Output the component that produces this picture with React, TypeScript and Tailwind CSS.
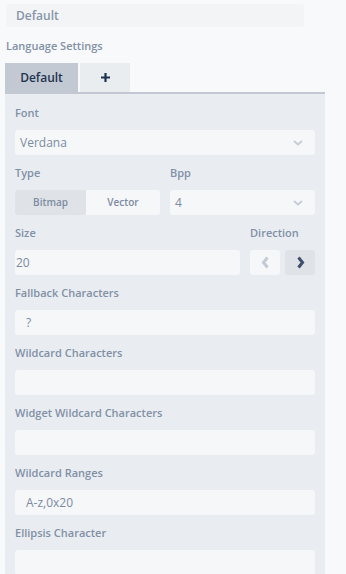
const Chevron = () => (
  <svg width="10" height="6" viewBox="0 0 10 6" className="shrink-0">
    <path d="M1 1l4 3.5L9 1" fill="none" stroke="#c5ccd6" strokeWidth="1.8" />
  </svg>
);

const Label = ({ children }: { children: React.ReactNode }) => (
  <div className="h-[20px] flex items-center text-[11px] font-semibold text-[#8290a6]">
    {children}
  </div>
);

const Field = ({ value, pad = 'px-[6px]' }: { value?: string; pad?: string }) => (
  <div
    className={`h-[25px] mt-[7px] flex items-center rounded-[3px] bg-[#f5f7f9] text-[12px] text-[#7c8ba1] ${pad}`}
  >
    {value}
  </div>
);

const Select = ({ value }: { value: string }) => (
  <div className="h-[25px] mt-[7px] flex items-center justify-between rounded-[3px] bg-[#f5f7f9] pl-[5px] pr-[12px] text-[12px] text-[#7c8ba1]">
    <span>{value}</span>
    <Chevron />
  </div>
);

export default function App() {
  return (
    <div
      className="w-[346px] h-[574px] overflow-hidden bg-[#f8f9fb]"
      style={{ fontFamily: '"Open Sans", sans-serif' }}
    >
      <div className="pt-[4px] pl-[6px]">
        <div className="w-[298px] h-[23px] flex items-center rounded-[3px] bg-[#f2f4f6] pl-[10px] text-[12px] font-semibold text-[#8794a8]">
          Default
        </div>
        <div className="mt-[9px] h-[20px] flex items-center text-[11px] font-semibold text-[#8290a6]">
          Language Settings
        </div>
      </div>

      <div className="ml-[5px] w-[320px] mt-[7px]">
        <div className="flex h-[29px]">
          <div className="w-[73px] flex items-center justify-center bg-[#c2c9d3] text-[12px] font-semibold text-[#1f3350]">
            Default
          </div>
          <div className="ml-[2px] w-[50px] flex items-center justify-center bg-[#e9edf0] text-[#1f3350]">
            <svg width="11" height="11" viewBox="0 0 11 11">
              <path d="M5.5 1v9M1 5.5h9" stroke="#1f3350" strokeWidth="2.2" />
            </svg>
          </div>
        </div>
        <div className="h-[2px] bg-[#c2c9d3]" />

        <div className="bg-[#e9edf1] px-[10px] pt-[9px] h-[500px]">
          <Label>Font</Label>
          <Select value="Verdana" />

          <div className="flex gap-[10px] mt-[8px]">
            <div className="w-[145px]">
              <Label>Type</Label>
              <div className="h-[25px] mt-[7px] flex rounded-[3px] overflow-hidden text-[10px] font-semibold text-[#7c8ba1]">
                <div className="w-[71px] flex items-center justify-center bg-[#dfe3e8]">
                  Bitmap
                </div>
                <div className="flex-1 flex items-center justify-center bg-[#f5f7f9]">
                  Vector
                </div>
              </div>
            </div>
            <div className="flex-1">
              <Label>Bpp</Label>
              <Select value="4" />
            </div>
          </div>

          <div className="flex gap-[10px] mt-[8px]">
            <div className="flex-1">
              <Label>Size</Label>
              <Field value="20" pad="px-[1px]" />
            </div>
            <div className="w-[65px]">
              <Label>Direction</Label>
              <div className="h-[25px] mt-[7px] flex justify-between">
                <div className="w-[30px] flex items-center justify-center rounded-[3px] bg-[#f5f7f9]">
                  <svg width="9" height="13" viewBox="0 0 9 13">
                    <path d="M6.5 1.5L2.5 6.5l4 5" fill="none" stroke="#c2cad4" strokeWidth="3" />
                  </svg>
                </div>
                <div className="w-[30px] flex items-center justify-center rounded-[3px] bg-[#dfe3e8]">
                  <svg width="9" height="13" viewBox="0 0 9 13">
                    <path d="M2.5 1.5l4 5-4 5" fill="none" stroke="#3c4f6c" strokeWidth="3" />
                  </svg>
                </div>
              </div>
            </div>
          </div>

          <div className="mt-[8px]">
            <Label>Fallback Characters</Label>
            <Field value="?" pad="px-[11px]" />
          </div>
          <div className="mt-[8px]">
            <Label>Wildcard Characters</Label>
            <Field />
          </div>
          <div className="mt-[8px]">
            <Label>Widget Wildcard Characters</Label>
            <Field />
          </div>
          <div className="mt-[8px]">
            <Label>Wildcard Ranges</Label>
            <Field value="A-z,0x20" pad="px-[11px]" />
          </div>
          <div className="mt-[8px]">
            <Label>Ellipsis Character</Label>
            <Field />
          </div>
        </div>
      </div>
    </div>
  );
}
